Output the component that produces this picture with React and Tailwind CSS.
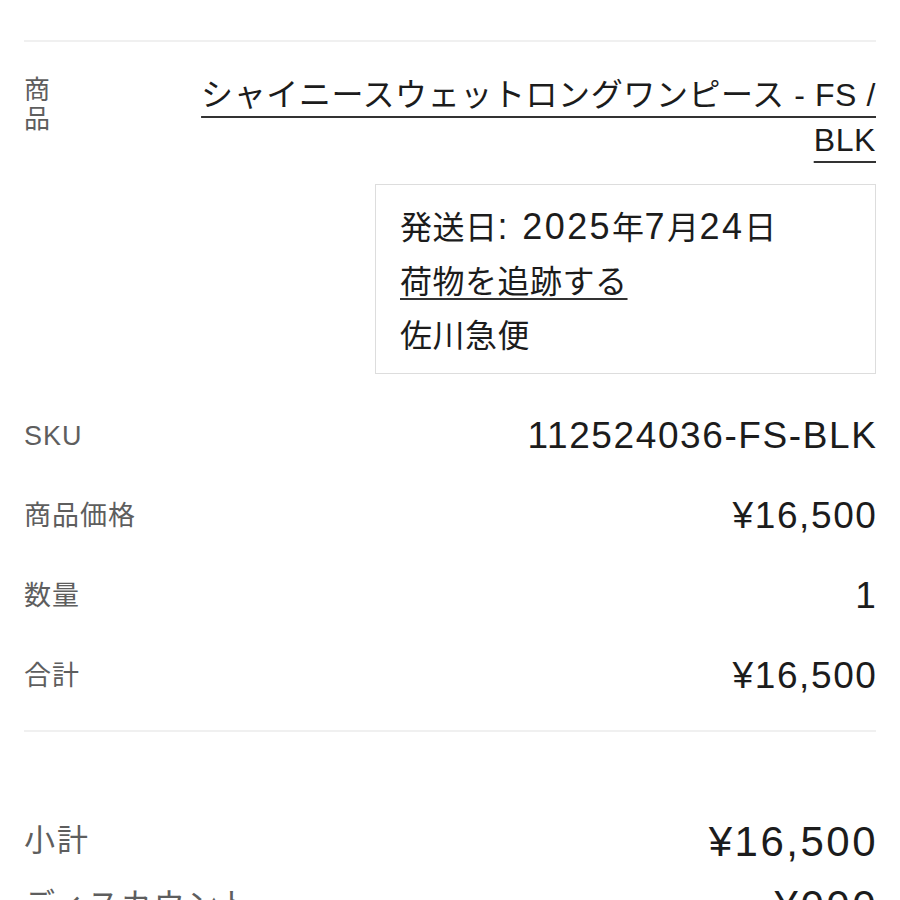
import React from "react";

const Row = ({ label, value }) => (
  <div className="flex h-[80px] items-center justify-between">
    <span className="text-[27px] tracking-[1px] text-[#5e5e5e]">{label}</span>
    <span className="-mr-[1.5px] text-[37px] tracking-[1.6px] text-[#1c1c1c]">{value}</span>
  </div>
);

const L = ({ children }) => (
  <span className="text-[36px] leading-none tracking-[2.4px]">{children}</span>
);

export default function App() {
  return (
    <div className="h-[900px] w-[900px] overflow-hidden bg-white px-6 font-['Liberation_Sans','Noto_Sans_CJK_JP',sans-serif]">
      <div className="h-[40px]" />
      <div className="border-t-2 border-[#f0f0f0]" />

      <div className="flex justify-between pt-[31px]">
        <span className="w-[28px] pt-[3px] text-[26px] leading-[29px] text-[#5e5e5e]">商品</span>
        <a className="whitespace-nowrap text-right text-[32px] leading-[45px] tracking-[0.6px] text-[#1c1c1c] underline decoration-[#333] decoration-[2px] underline-offset-[10px]">
          シャイニースウェットロングワンピース - FS /
          <br />
          BLK
        </a>
      </div>

      <div className="ml-auto mt-[21px] h-[190px] w-[501px] border-[1.5px] border-[#dddddd] pl-[24px] pt-[16px] text-[32px] leading-[54px] tracking-[0.5px] text-[#1c1c1c]">
        <div>
          発送日<L>: 2025</L>年<L>7</L>月<L>24</L>日
        </div>
        <div>
          <span className="underline decoration-[#333] decoration-[2px] underline-offset-[5px]">荷物を追跡する</span>
        </div>
        <div>佐川急便</div>
      </div>

      <div className="mt-[22px]">
        <Row label="SKU" value="112524036-FS-BLK" />
        <Row label="商品価格" value="¥16,500" />
        <Row label="数量" value="1" />
        <Row label="合計" value="¥16,500" />
      </div>

      <div className="mt-[14px] border-t-2 border-[#f0f0f0]" />

      <div className="pt-[77px]">
        <div className="flex h-[64px] items-center justify-between">
          <span className="text-[31px] tracking-[2px] text-[#5e5e5e]">小計</span>
          <span className="-mr-[2px] text-[42px] tracking-[2.5px] text-[#1c1c1c]">¥16,500</span>
        </div>
        <div className="flex h-[64px] items-center justify-between">
          <span className="text-[31px] tracking-[2px] text-[#5e5e5e]">ディスカウント</span>
          <span className="-mr-[2px] text-[42px] tracking-[2.5px] text-[#1c1c1c]">¥000</span>
        </div>
      </div>
    </div>
  );
}
